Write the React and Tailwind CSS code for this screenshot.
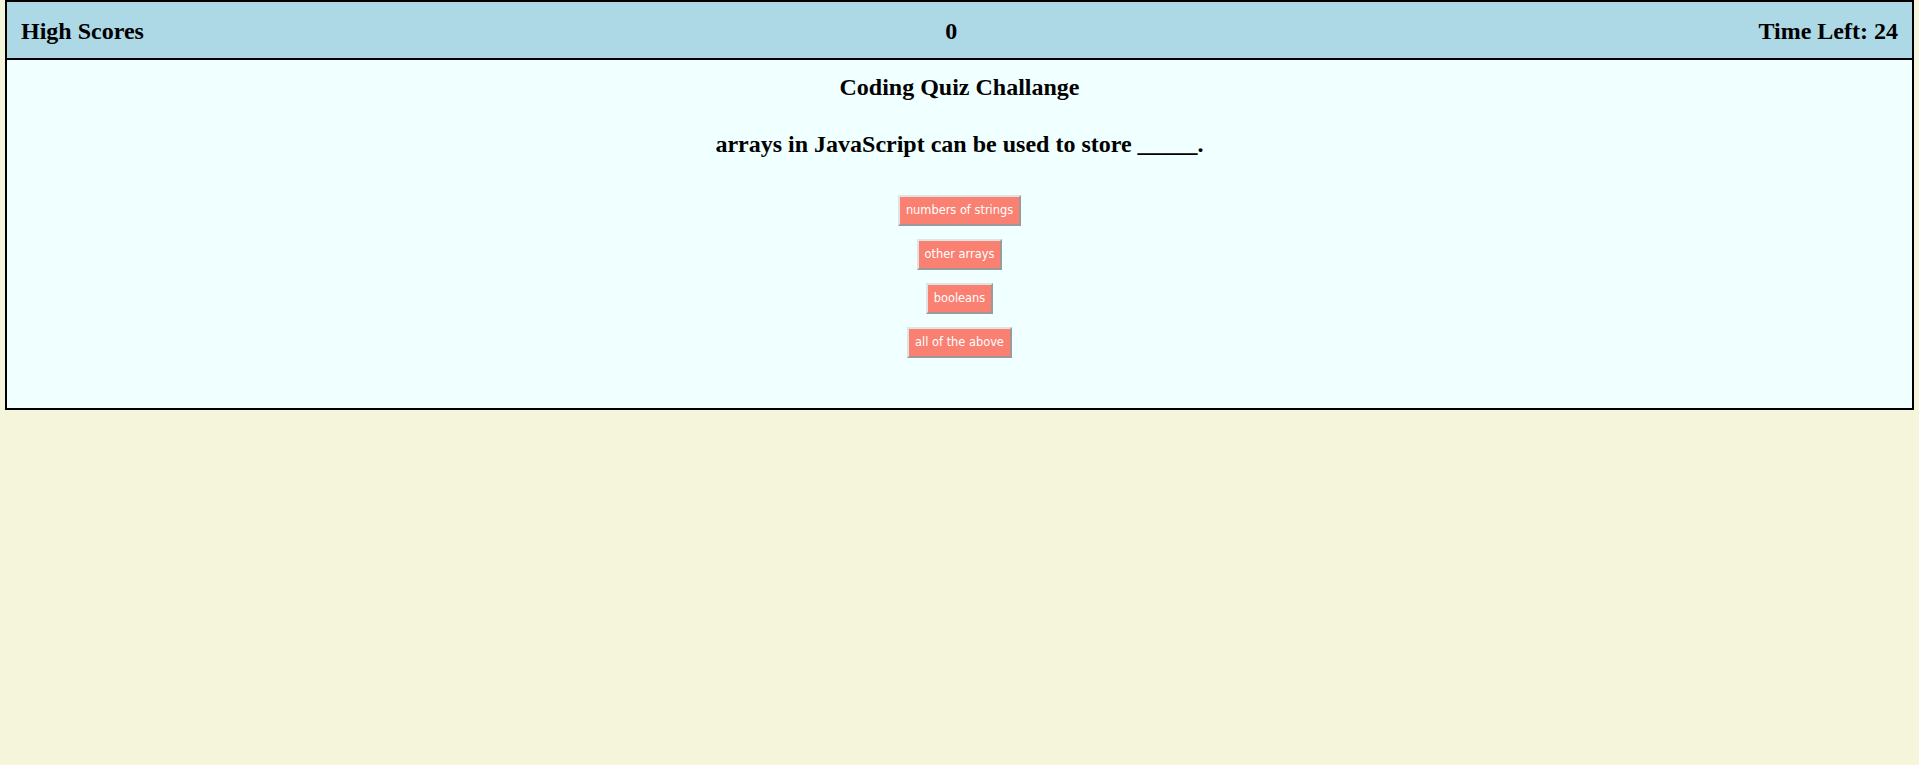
import React from "react";

const choices = ["numbers of strings", "other arrays", "booleans", "all of the above"];

const App = () => {
  return (
    <div
      className="min-h-[765px] bg-[#f5f5dc] px-[5px] text-black"
      style={{ fontFamily: '"Liberation Serif", "Times New Roman", serif' }}
    >
      <header className="flex h-[60px] items-center justify-between border-2 border-black bg-[#add8e6] px-[14px] pt-[2px]">
        <h2 className="text-[24px] font-bold leading-[normal]">High Scores</h2>
        <h2 className="text-[24px] font-bold leading-[normal]">0</h2>
        <h2 className="text-[24px] font-bold leading-[normal]">Time Left: 24</h2>
      </header>

      <main className="flex flex-col items-center border-2 border-t-0 border-black bg-[#f0ffff] pb-[50px]">
        <h2 className="mt-[14px] text-[24px] font-bold leading-[normal]">Coding Quiz Challange</h2>
        <h2 className="mt-[30px] text-[24px] font-bold leading-[normal]">
          arrays in JavaScript can be used to store _____.
        </h2>

        <div className="mt-[37px] flex flex-col items-center gap-[13px]">
          {choices.map((choice) => (
            <button
              key={choice}
              type="button"
              className="flex h-[31px] items-center border-2 border-t-[#e3e3e3] border-l-[#e3e3e3] border-b-[#9a9a9a] border-r-[#9a9a9a] bg-[#fa8072] px-[6px] text-[11.4px] leading-[13px] text-white"
              style={{ fontFamily: '"DejaVu Sans", Tahoma, sans-serif' }}
            >
              {choice}
            </button>
          ))}
        </div>
      </main>
    </div>
  );
};

export default App;
